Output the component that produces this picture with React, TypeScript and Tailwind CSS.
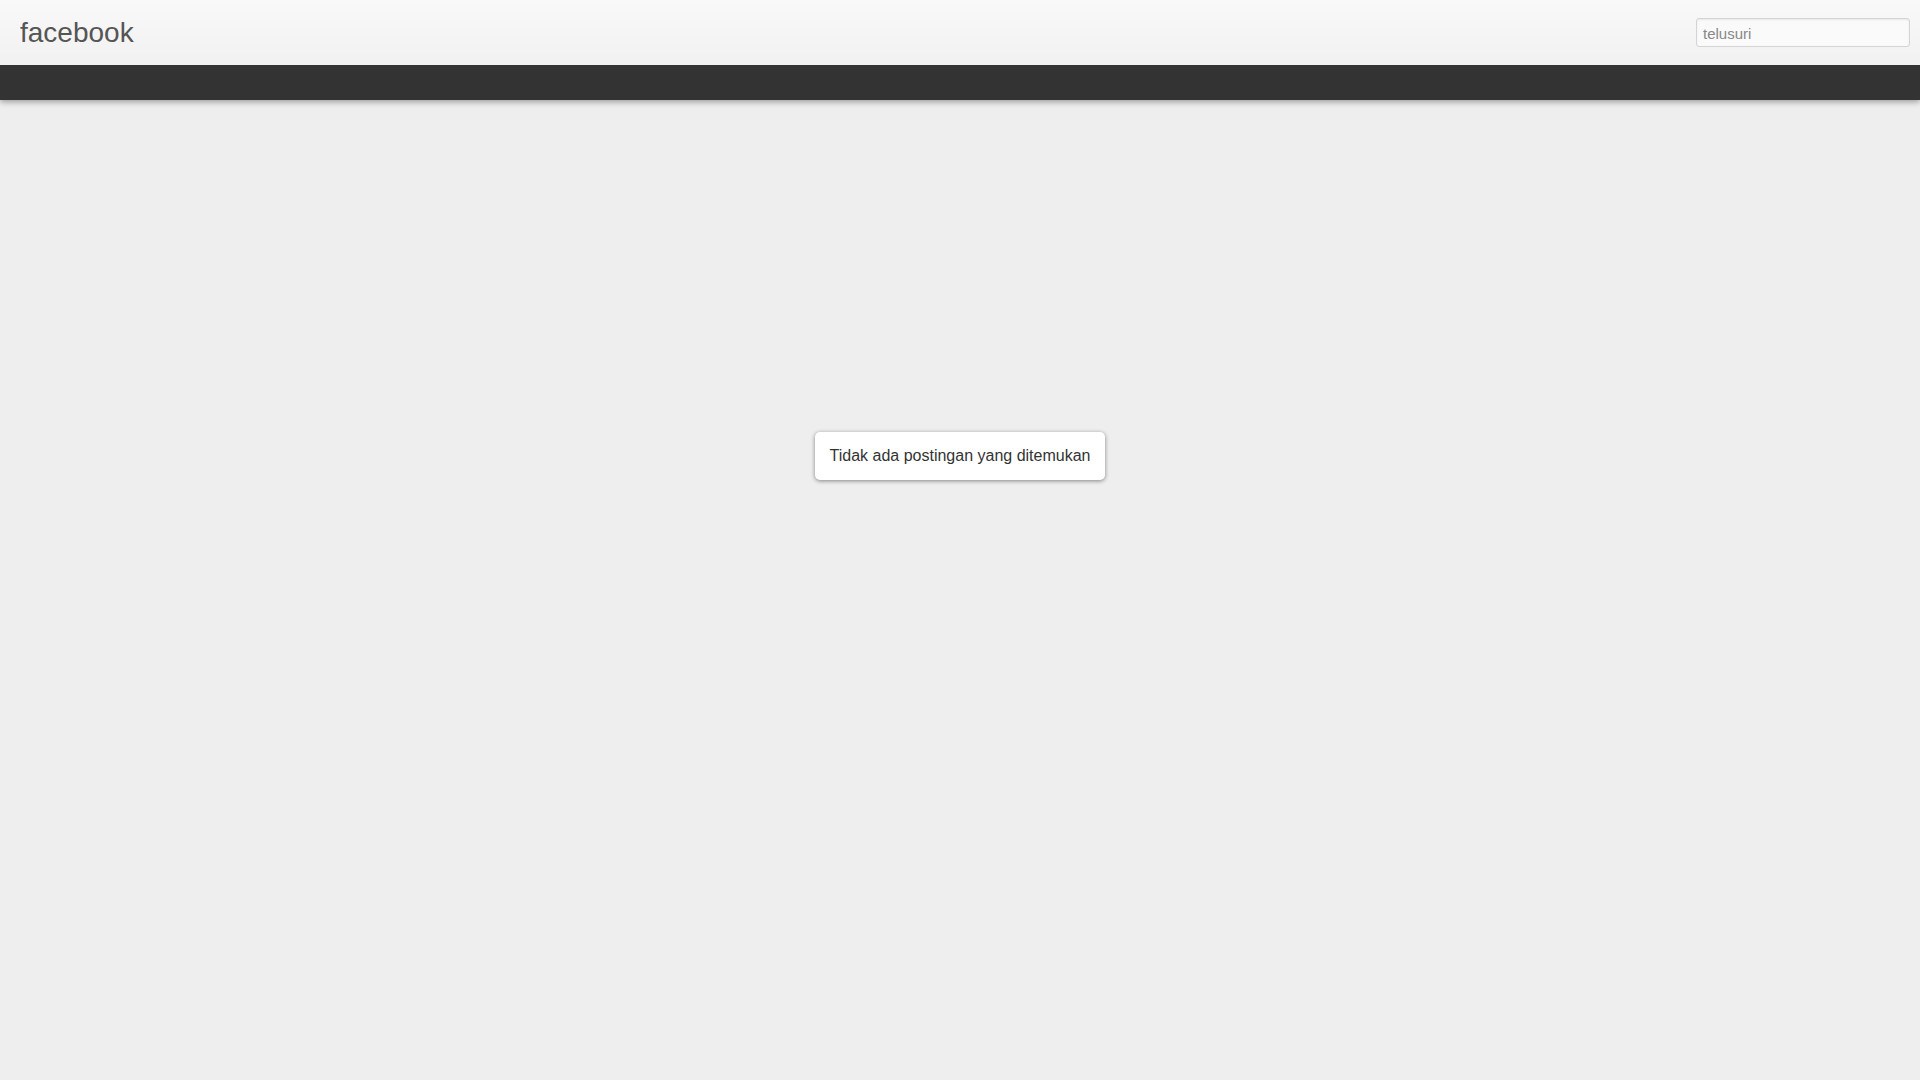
export default function App() {
  return (
    <div className="min-h-screen bg-[#eeeeee] font-['Liberation_Sans',Arial,sans-serif]">
      {/* top header */}
      <header className="shadow-[0_2px_6px_rgba(0,0,0,0.35)]">
        <div className="flex h-[65px] items-center justify-between bg-gradient-to-b from-[#f9f9f9] to-[#f1f1f1] pl-5 pr-[10px]">
          <a className="pt-[1px] text-[28px] leading-none text-[#555555]">facebook</a>
          <input
            type="text"
            placeholder="telusuri"
            className="h-[29px] w-[214px] rounded-[3px] border border-[#d4d4d4] bg-[#fafafa] px-[6px] pt-[2px] text-[15px] text-[#555] placeholder:text-[#888] outline-none shadow-[inset_0_1px_2px_rgba(0,0,0,0.08)]"
          />
        </div>
        <div className="h-[35px] bg-[#333333]" />
      </header>

      <main className="flex justify-center pt-[332px]">
        <div className="flex h-[48px] w-[290px] items-center justify-center rounded-[5px] bg-white text-[16px] text-[#333333] shadow-[0_1px_4px_rgba(0,0,0,0.45)]">
          Tidak ada postingan yang ditemukan
        </div>
      </main>
    </div>
  );
}
